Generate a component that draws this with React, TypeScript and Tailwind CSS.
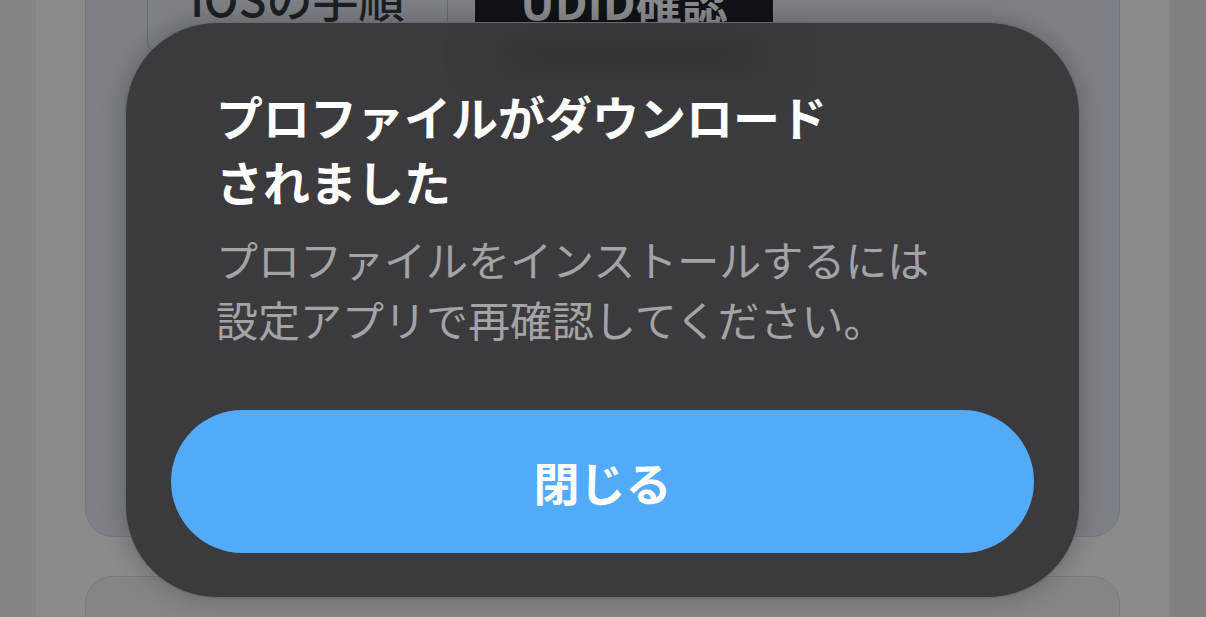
export default function App() {
  return (
    <div className="relative h-[617px] w-[1206px] overflow-hidden bg-[#888888] font-['Noto_Sans_CJK_JP','Noto_Sans',sans-serif]">
      {/* page behind the sheet (dimmed) */}
      <div className="flex h-full">
        <div className="w-[36px] bg-[#848484]" />
        <div className="flex-1 bg-[#8a8a8a] pl-[49px] pr-[50px]">
          <div className="-mt-[40px] h-[577px] rounded-b-[28px] border border-[#6f7785] bg-[#7d8085]">
            <div className="flex items-start pl-[61px]">
              <div className="flex h-[97px] w-[301px] items-end justify-center rounded-b-[18px] border-x border-b border-[#666c76] pb-[37px]">
                <span className="text-[46px] leading-none font-medium text-[#1e1f22]">iOSの手順</span>
              </div>
              <div className="ml-[27px] flex h-[62px] w-[298px] items-end justify-center bg-[#111318]">
                <span className="text-[46px] leading-none font-bold text-[#8a8c90]">UDID確認</span>
              </div>
            </div>
          </div>
          <div className="mt-[39px] h-[300px] rounded-t-[28px] border border-[#757a82] bg-[#858585]" />
        </div>
        <div className="w-[36px] bg-[#818181]" />
      </div>

      {/* alert sheet */}
      <div className="absolute left-[125px] top-[22px] flex h-[576px] w-[955px] flex-col overflow-hidden rounded-[92px] border border-[#6c6c6f] bg-[#3b3b3d] px-[45px] pt-[60px] pb-[44px] shadow-[0_0_24px_rgba(0,0,0,0.25)]">
        <div className="pointer-events-none absolute left-[360px] top-[18px] h-[28px] w-[290px] rounded-full bg-black/20 blur-xl" />
        <div className="relative px-[45px]">
          <h2 className="text-[47px] leading-[65px] font-bold text-white">
            プロファイルがダウンロード
            <br />
            されました
          </h2>
          <p className="mt-[16px] text-[42px] leading-[60px] text-[#a4a4a7]">
            プロファイルをインストールするには
            <br />
            設定アプリで再確認してください。
          </p>
        </div>
        <button
          type="button"
          className="relative mt-auto flex h-[143px] w-full items-center justify-center rounded-full bg-[#52abf8] text-[46px] font-bold text-white"
        >
          閉じる
        </button>
      </div>
    </div>
  );
}
